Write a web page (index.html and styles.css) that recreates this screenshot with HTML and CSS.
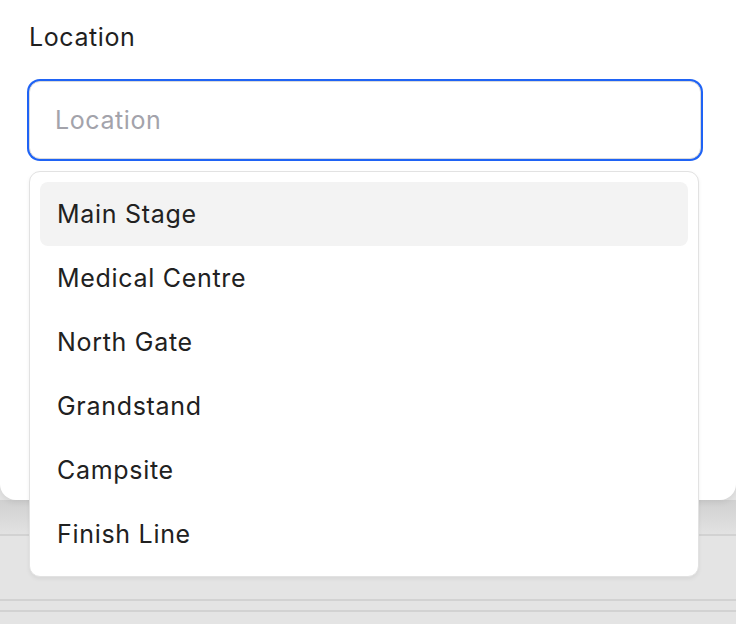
FILE: index.html
```html
<!DOCTYPE html>
<html lang="en">
<head>
    <meta charset="UTF-8">
    <meta name="viewport" content="width=device-width, initial-scale=1.0">
    <title>Location</title>
    <link rel="stylesheet" href="styles.css">
</head>
<body>
    <div class="backdrop">
        <div class="backdrop-row first"></div>
        <div class="backdrop-row second"></div>
        <div class="backdrop-row third"></div>
    </div>

    <div class="sheet">
        <label class="field-label" for="location">Location</label>
        <div class="combo">
            <input type="text" id="location" class="field-input" placeholder="Location" autocomplete="off">
            <ul class="menu">
                <li class="menu-item active">Main Stage</li>
                <li class="menu-item">Medical Centre</li>
                <li class="menu-item">North Gate</li>
                <li class="menu-item">Grandstand</li>
                <li class="menu-item">Campsite</li>
                <li class="menu-item">Finish Line</li>
            </ul>
        </div>
    </div>
</body>
</html>
```

FILE: styles.css
```css
html, body {
    margin: 0;
    height: 100%;
    overflow: hidden;
}
body {
    font-family: Inter, "Noto Sans", Arial, sans-serif;
    background-color: #e4e4e4;
    color: #212121;
    position: relative;
}
.backdrop {
    position: absolute;
    left: 0;
    right: 0;
    top: 500px;
    bottom: 0;
}
.backdrop-row {
    border-bottom: 2px solid #d2d2d2;
}
.backdrop-row.first {
    height: 34px;
    background: linear-gradient(#d0d0d0, #e2e2e2);
}
.backdrop-row.second {
    height: 63px;
}
.backdrop-row.third {
    height: 9px;
}
.sheet {
    position: relative;
    height: 500px;
    box-sizing: border-box;
    padding: 22px 35px 0 29px;
    background: white;
    border-radius: 0 0 16px 16px;
    box-shadow: 0 2px 6px rgba(0,0,0,0.08);
}
.field-label {
    display: block;
    font-size: 25px;
    letter-spacing: 0.6px;
    line-height: 30px;
    color: #1f1f1f;
    margin-bottom: 29px;
}
.combo {
    position: relative;
}
.field-input {
    display: block;
    width: 100%;
    height: 78px;
    box-sizing: border-box;
    padding: 0 25px;
    font-family: inherit;
    font-size: 25px;
    letter-spacing: 0.6px;
    color: #212121;
    border: 1px solid #dadada;
    border-radius: 11px;
    box-shadow: 0 0 0 2px #1f63f5;
    outline: none;
    background: white;
}
.field-input::placeholder {
    color: #a3a3ab;
}
.menu {
    position: absolute;
    left: 0;
    right: 2px;
    top: 90px;
    margin: 0;
    padding: 10px;
    list-style: none;
    background: white;
    border: 1px solid #e2e2e2;
    border-radius: 11px;
    box-shadow: 0 2px 4px rgba(0,0,0,0.06);
    z-index: 2;
}
.menu-item {
    height: 64px;
    line-height: 64px;
    padding: 0 17px;
    font-size: 25px;
    letter-spacing: 0.7px;
    border-radius: 8px;
    cursor: pointer;
}
.menu-item.active {
    background-color: #f3f3f3;
}
```
